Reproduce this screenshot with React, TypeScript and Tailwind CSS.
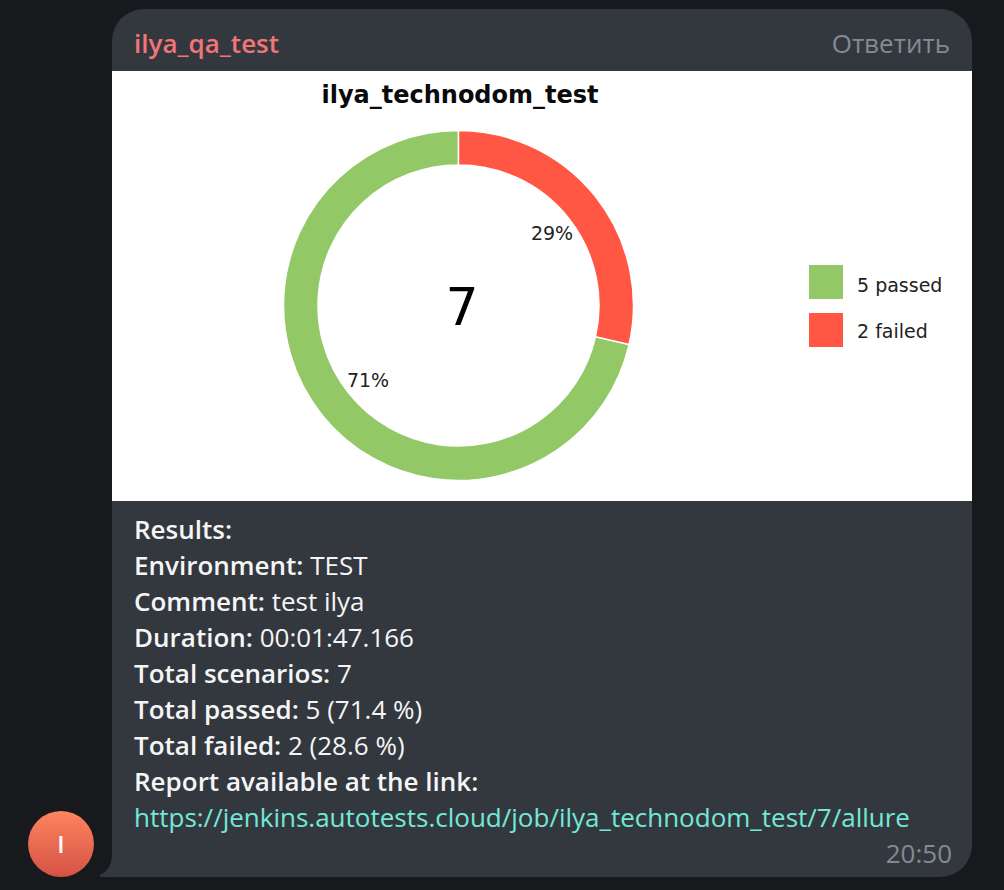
const details = [
  { label: 'Environment:', value: 'TEST' },
  { label: 'Comment:', value: 'test ilya' },
  { label: 'Duration:', value: '00:01:47.166' },
  { label: 'Total scenarios:', value: '7' },
  { label: 'Total passed:', value: '5 (71.4 %)' },
  { label: 'Total failed:', value: '2 (28.6 %)' },
];

const reportUrl = 'https://jenkins.autotests.cloud/job/ilya_technodom_test/7/allure';

const center = { x: 346.5, y: 234.5 };

function point(radius: number, share: number) {
  const angle = share * 2 * Math.PI;
  return `${center.x + radius * Math.sin(angle)} ${center.y - radius * Math.cos(angle)}`;
}

function ringSlice(from: number, to: number) {
  const outer = 175;
  const inner = 140.5;
  const large = to - from > 0.5 ? 1 : 0;
  return `M ${point(outer, from)} A ${outer} ${outer} 0 ${large} 1 ${point(outer, to)} L ${point(inner, to)} A ${inner} ${inner} 0 ${large} 0 ${point(inner, from)} Z`;
}

function ResultChart() {
  return (
    <svg
      viewBox="0 0 860 430"
      role="img"
      aria-label="5 passed, 2 failed"
      className="block w-full bg-white font-['DejaVu_Sans',Verdana,sans-serif]"
    >
      <text x="348" y="32" textAnchor="middle" fontSize="24" fontWeight="700" fill="#0a0a0a">
        ilya_technodom_test
      </text>
      <path d={ringSlice(2 / 7, 1)} fill="#92c966" stroke="#fff" strokeWidth="1.5" />
      <path d={ringSlice(0, 2 / 7)} fill="#ff5744" stroke="#fff" strokeWidth="1.5" />
      <text x="440" y="169" textAnchor="middle" fontSize="19" fill="#222">29%</text>
      <text x="256" y="316" textAnchor="middle" fontSize="19" fill="#222">71%</text>
      <text x="350" y="254" textAnchor="middle" fontSize="52" fill="#000">7</text>
      <rect x="697" y="194" width="34" height="34" fill="#92c966" />
      <rect x="697" y="242" width="34" height="34" fill="#ff5744" />
      <text x="745" y="221" fontSize="19" fill="#222">5 passed</text>
      <text x="745" y="267" fontSize="19" fill="#222">2 failed</text>
    </svg>
  );
}

export default function App() {
  return (
    <main className="flex min-h-screen items-end gap-[18px] bg-[#18191c] pt-[9px] pr-8 pb-[13px] pl-7 font-['Open_Sans','Noto_Sans',sans-serif] text-[26px] leading-9 text-[#f5f5f5]">
      <div className="flex size-[66px] shrink-0 items-center justify-center rounded-full bg-linear-to-b from-[#ff845e] to-[#d45246] text-2xl font-semibold text-white">
        I
      </div>
      <article className="relative min-w-0 flex-1 rounded-t-[32px] rounded-br-[32px] bg-[#33383f]">
        <svg
          viewBox="0 0 12 24"
          aria-hidden="true"
          className="absolute right-full bottom-0 h-6 w-3 text-[#33383f]"
        >
          <path d="M12 0V24H0V22C8 18 12 11 12 0Z" fill="currentColor" />
        </svg>
        <header className="flex items-center justify-between px-[22px] pt-4 pb-[10px]">
          <h1 className="font-semibold text-[#f37578]">ilya_qa_test</h1>
          <button type="button" className="text-[#828b91]">Ответить</button>
        </header>
        <ResultChart />
        <div className="px-[22px] pt-[10px] pb-[6px]">
          <p className="font-semibold">Results:</p>
          {details.map((item) => (
            <p key={item.label}>
              <span className="font-semibold">{item.label}</span> {item.value}
            </p>
          ))}
          <p className="font-semibold">Report available at the link:</p>
          <a href={reportUrl} className="block break-words text-[#73e8d8]">{reportUrl}</a>
          <p className="-mr-0.5 text-right text-[#828b91]">
            <time>20:50</time>
          </p>
        </div>
      </article>
    </main>
  );
}
